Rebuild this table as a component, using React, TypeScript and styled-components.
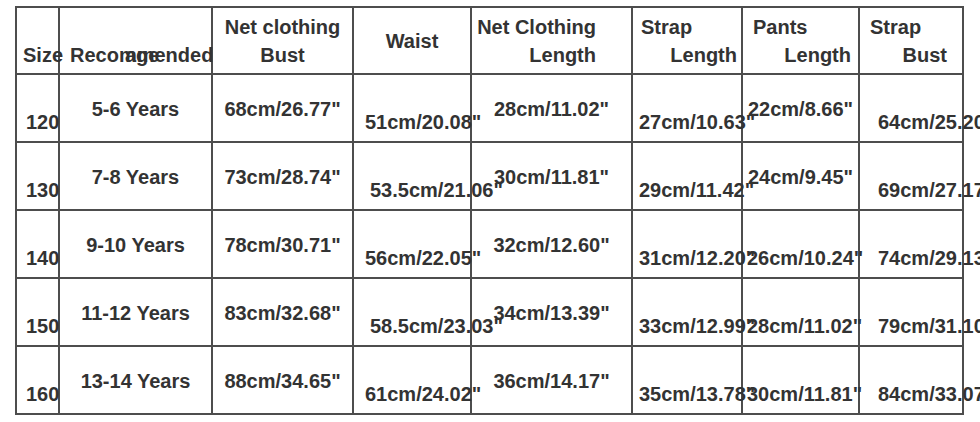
import styled, { createGlobalStyle } from "styled-components";

const Global = createGlobalStyle`
  html, body {
    margin: 0;
    background: #fff;
    overflow: hidden;
  }
`;

const Page = styled.div`
  padding: 6px 0 0 15px;
  font-family: "Liberation Sans", Arial, sans-serif;
  font-weight: bold;
  font-size: 20px;
  color: #333;
`;

const Table = styled.table`
  border-collapse: collapse;
  table-layout: fixed;
  width: 947px;
`;

const HeadRow = styled.tr`
  height: 67px;
`;

const Row = styled.tr`
  height: 68px;
`;

const Th = styled.th<{ $pl?: number; $pr?: number; $align?: string }>`
  padding: 0 ${(p) => p.$pr ?? 0}px 0 ${(p) => p.$pl ?? 0}px;
  border: 2px solid #4d4d4d;
  font-weight: bold;
  line-height: 28px;
  white-space: nowrap;
  vertical-align: middle;
  text-align: ${(p) => p.$align ?? "center"};
`;

const Line = styled.div<{ $align?: string }>`
  text-align: ${(p) => p.$align ?? "inherit"};
`;

const Overlap = styled.span`
  position: relative;
`;

// the stray "age" printed over the middle of "Recommended"
const Stray = styled.span`
  position: absolute;
  left: 55px;
  top: 0;
  line-height: normal;
`;

const Td = styled.td<{ $drop?: boolean; $pl?: number; $align?: string }>`
  padding: ${(p) => (p.$drop ? 28 : 2)}px 0 0 ${(p) => p.$pl ?? 0}px;
  border: 2px solid #4d4d4d;
  line-height: 27px;
  white-space: nowrap;
  vertical-align: middle;
  text-align: ${(p) => p.$align ?? "left"};
`;

type SizeRow = {
  size: string;
  age: string;
  bust: string;
  waist: string;
  waistPad: number;
  length: string;
  strap: string;
  pants: string;
  pantsDrop: boolean;
  strapBust: string;
};

const rows: SizeRow[] = [
  { size: "120", age: "5-6 Years", bust: '68cm/26.77"', waist: '51cm/20.08"', waistPad: 11, length: '28cm/11.02"', strap: '27cm/10.63"', pants: '22cm/8.66"', pantsDrop: false, strapBust: '64cm/25.20"' },
  { size: "130", age: "7-8 Years", bust: '73cm/28.74"', waist: '53.5cm/21.06"', waistPad: 16, length: '30cm/11.81"', strap: '29cm/11.42"', pants: '24cm/9.45"', pantsDrop: false, strapBust: '69cm/27.17"' },
  { size: "140", age: "9-10 Years", bust: '78cm/30.71"', waist: '56cm/22.05"', waistPad: 11, length: '32cm/12.60"', strap: '31cm/12.20"', pants: '26cm/10.24"', pantsDrop: true, strapBust: '74cm/29.13"' },
  { size: "150", age: "11-12 Years", bust: '83cm/32.68"', waist: '58.5cm/23.03"', waistPad: 16, length: '34cm/13.39"', strap: '33cm/12.99"', pants: '28cm/11.02"', pantsDrop: true, strapBust: '79cm/31.10"' },
  { size: "160", age: "13-14 Years", bust: '88cm/34.65"', waist: '61cm/24.02"', waistPad: 11, length: '36cm/14.17"', strap: '35cm/13.78"', pants: '30cm/11.81"', pantsDrop: true, strapBust: '84cm/33.07"' },
];

const widths = [43, 153, 141, 118, 161, 110, 117, 104];

export default function App() {
  return (
    <Page>
      <Global />
      <Table>
        <colgroup>
          {widths.map((w, i) => (
            <col key={i} style={{ width: w }} />
          ))}
        </colgroup>
        <thead>
          <HeadRow>
            <Th $pl={6} $align="left">
              <Line>&nbsp;</Line>
              <Line>Size</Line>
            </Th>
            <Th $pl={10} $align="left">
              <Line>&nbsp;</Line>
              <Line>
                <Overlap>
                  Recommended
                  <Stray>age</Stray>
                </Overlap>
              </Line>
            </Th>
            <Th>
              <Line>Net clothing</Line>
              <Line>Bust</Line>
            </Th>
            <Th>Waist</Th>
            <Th $pr={35} $align="right">
              <Line>Net Clothing</Line>
              <Line>Length</Line>
            </Th>
            <Th $pl={8} $pr={4}>
              <Line $align="left">Strap</Line>
              <Line $align="right">Length</Line>
            </Th>
            <Th $pl={10} $pr={7}>
              <Line $align="left">Pants</Line>
              <Line $align="right">Length</Line>
            </Th>
            <Th $pl={10} $pr={15}>
              <Line $align="left">Strap</Line>
              <Line $align="right">Bust</Line>
            </Th>
          </HeadRow>
        </thead>
        <tbody>
          {rows.map((r) => (
            <Row key={r.size}>
              <Td $drop $pl={9}>{r.size}</Td>
              <Td $align="center">{r.age}</Td>
              <Td $align="center">{r.bust}</Td>
              <Td $drop $pl={r.waistPad}>{r.waist}</Td>
              <Td $align="center">{r.length}</Td>
              <Td $drop $pl={6}>{r.strap}</Td>
              {r.pantsDrop ? (
                <Td $drop $pl={4}>{r.pants}</Td>
              ) : (
                <Td $align="center">{r.pants}</Td>
              )}
              <Td $drop $pl={18}>{r.strapBust}</Td>
            </Row>
          ))}
        </tbody>
      </Table>
    </Page>
  );
}
